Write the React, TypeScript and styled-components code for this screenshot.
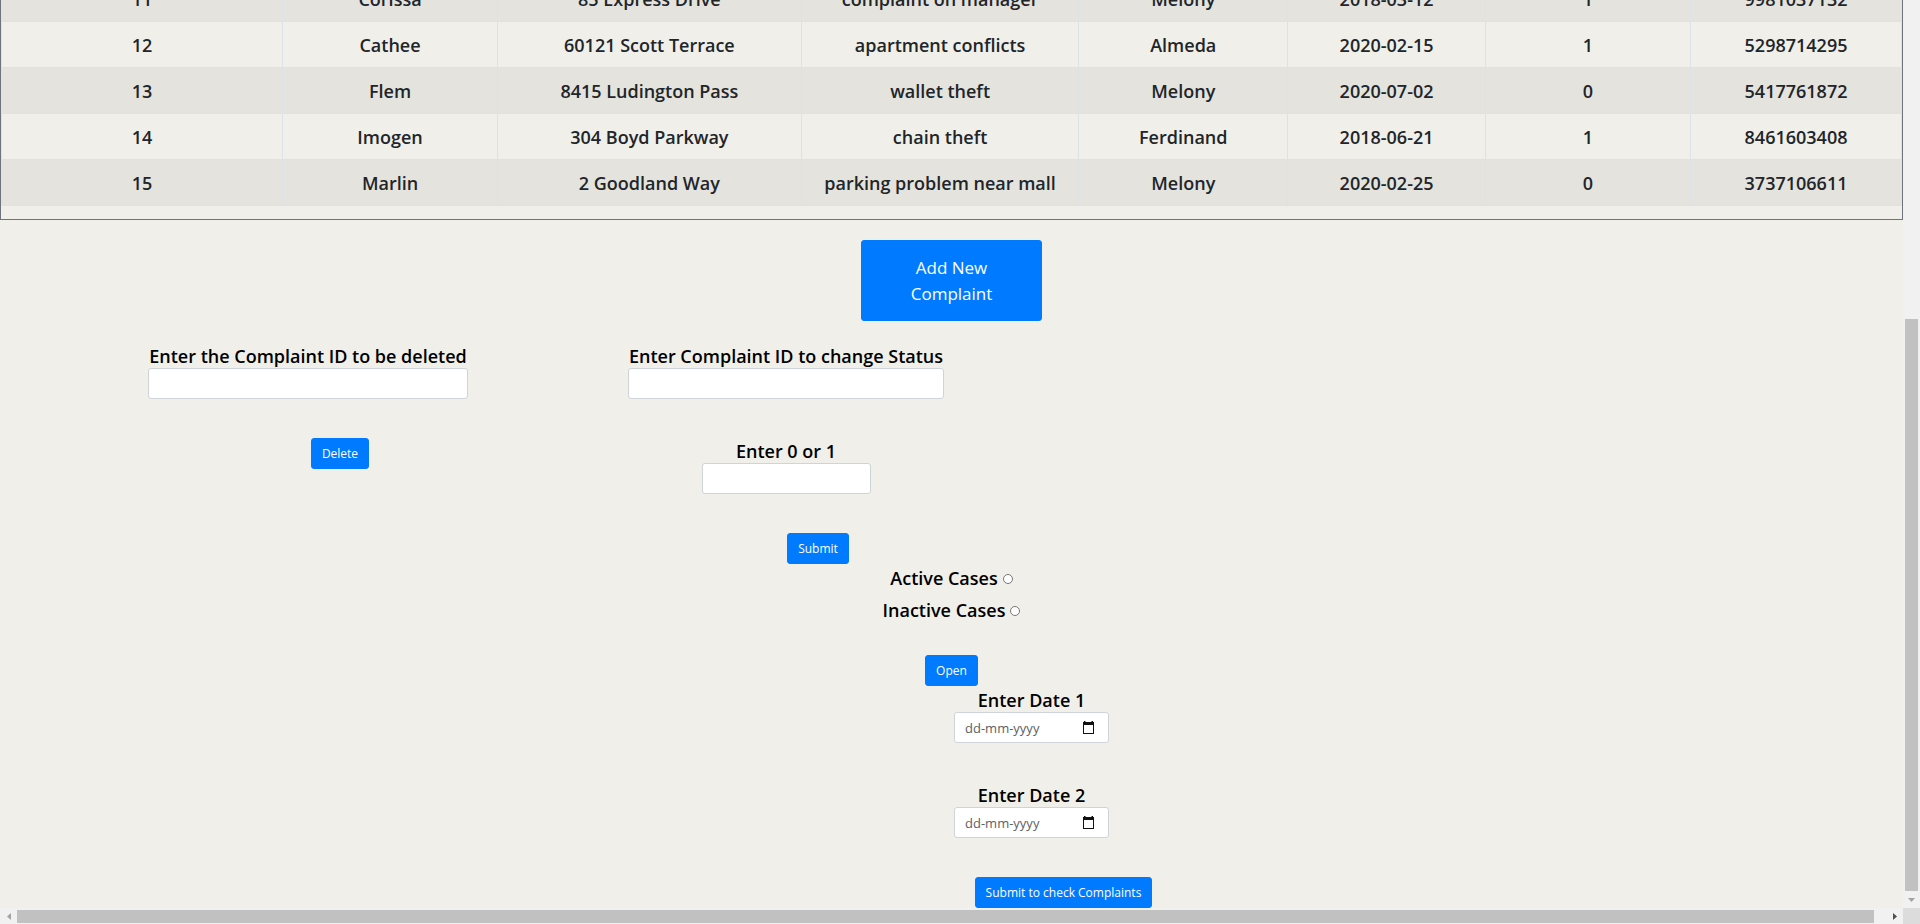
import React from "react";
import styled, { createGlobalStyle } from "styled-components";

const GlobalStyle = createGlobalStyle`
  *, *::before, *::after { box-sizing: border-box; }
  body {
    margin: 0;
    background: #f0efe9;
    color: #000;
    font-family: "Open Sans", "Noto Sans", sans-serif;
    font-size: 18px;
    font-weight: 600;
    line-height: 24px;
  }
`;

const Frame = styled.div`
  display: grid;
  grid-template-columns: minmax(0, 1fr) 17px;
  grid-template-rows: minmax(0, 1fr) 16px;
  height: 100vh;
`;

const Page = styled.main`
  display: flex;
  flex-direction: column;
  justify-content: flex-end;
  overflow: hidden;
`;

const TablePanel = styled.section`
  flex: none;
  padding-bottom: 13px;
  border: 1px solid #6c757d;
`;

const Table = styled.table`
  width: 100%;
  table-layout: fixed;
  border-collapse: collapse;
  color: #212529;
  text-align: center;
`;

const Row = styled.tr`
  height: 46px;
  &:nth-child(odd) { background: #e4e3dd; }
`;

const Cell = styled.td`
  padding: 1px 12px 0;
  border: 1px solid #dee2e6;
  white-space: nowrap;
`;

const Actions = styled.section`
  display: flex;
  flex: none;
  flex-direction: column;
  padding-top: 20px;
`;

const Button = styled.button`
  height: 31px;
  padding: 0 10px;
  border: 1px solid #007bff;
  border-radius: 3px;
  background: #007bff;
  color: #fff;
  font-family: inherit;
  font-size: 12px;
  font-weight: 400;
  line-height: 20px;
`;

const AddButton = styled(Button)`
  align-self: center;
  width: 181px;
  height: 81px;
  padding: 0 40px;
  font-size: 17px;
  line-height: 26px;
`;

const ShiftedButton = styled(Button)`
  margin-left: 64px;
`;

const IdForms = styled.div`
  display: grid;
  grid-template-columns: 320px 316px;
  column-gap: 160px;
  margin: 23px 0 2px 148px;
`;

const Form = styled.form`
  display: flex;
  flex-direction: column;
  align-items: center;
`;

const DateForm = styled(Form)`
  margin-top: 2px;
  padding-left: 160px;
`;

const Field = styled.div<{ $width?: string; $last?: boolean }>`
  display: flex;
  flex-direction: column;
  align-items: center;
  width: ${(p) => p.$width ?? "100%"};
  margin-bottom: ${(p) => (p.$last ? 39 : 40)}px;
  white-space: nowrap;
`;

const Input = styled.input`
  width: 100%;
  height: 31px;
  padding: 0 8px;
  border: 1px solid #ced4da;
  border-radius: 3px;
  background: #fff;
  font-family: inherit;
  font-size: 14px;
`;

const DateBox = styled.span`
  display: flex;
  align-items: center;
  width: 100%;
  height: 31px;
  padding: 0 13px 0 10px;
  border: 1px solid #ced4da;
  border-radius: 3px;
  background: #fff;
`;

const DateInput = styled.input`
  flex: 1;
  min-width: 0;
  padding: 0;
  border: 0;
  background: none;
  font-family: inherit;
  font-size: 13px;
  font-weight: 400;
  &::placeholder { color: #5c6166; opacity: 1; }
`;

const RadioLine = styled.label`
  display: flex;
  align-items: center;
  gap: 5px;
  margin-bottom: 8px;
`;

const Radio = styled.input`
  appearance: none;
  width: 10px;
  height: 10px;
  margin: 2px 0 0;
  border: 1px solid #767676;
  border-radius: 50%;
  background: #fff;
  &:checked { box-shadow: inset 0 0 0 2px #fff; background: #007bff; }
`;

const OpenButton = styled(Button)`
  margin-top: 25px;
`;

const VerticalBar = styled.div`
  display: grid;
  grid-template-rows: 319fr 572fr 17px;
  justify-items: center;
  align-items: center;
  background: #f1f1f1;
`;

const HorizontalBar = styled.div`
  display: grid;
  grid-template-columns: 17px minmax(0, 1fr) 29px;
  align-items: center;
  background: #f1f1f1;
`;

const Thumb = styled.div<{ $vertical?: boolean }>`
  width: ${(p) => (p.$vertical ? "13px" : "100%")};
  height: ${(p) => (p.$vertical ? "100%" : "13px")};
  background: #c1c1c1;
`;

const Arrow = styled.svg<{ $end?: boolean }>`
  display: block;
  justify-self: ${(p) => (p.$end ? "end" : "center")};
  margin-right: ${(p) => (p.$end ? 6 : 0)}px;
`;

const Corner = styled.div`
  background: #dcdcdc;
`;

const columnWidths = ["14.8%", "11.3%", "16%", "14.6%", "11%", "10.4%", "10.8%", "11.1%"];

const complaints = [
  ["11", "Corissa", "85 Express Drive", "complaint on manager", "Melony", "2018-03-12", "1", "9981037132"],
  ["12", "Cathee", "60121 Scott Terrace", "apartment conflicts", "Almeda", "2020-02-15", "1", "5298714295"],
  ["13", "Flem", "8415 Ludington Pass", "wallet theft", "Melony", "2020-07-02", "0", "5417761872"],
  ["14", "Imogen", "304 Boyd Parkway", "chain theft", "Ferdinand", "2018-06-21", "1", "8461603408"],
  ["15", "Marlin", "2 Goodland Way", "parking problem near mall", "Melony", "2020-02-25", "0", "3737106611"],
];

function DateField({ id, label, last }: { id: string; label: string; last?: boolean }) {
  return (
    <Field $width="155px" $last={last}>
      <label htmlFor={id}>{label}</label>
      <DateBox>
        <DateInput id={id} placeholder="dd-mm-yyyy" />
        <svg width="13" height="14" viewBox="0 0 13 14" aria-hidden="true">
          <path d="M2 0h1.500v1h6V0H11v1h1v12H1V1h1zM2 4v8h9V4z" fill="#111" fillRule="evenodd" />
        </svg>
      </DateBox>
    </Field>
  );
}

export default function App() {
  return (
    <>
      <GlobalStyle />
      <Frame>
        <Page>
          <TablePanel>
            <Table>
              <colgroup>
                {columnWidths.map((width, i) => (
                  <col key={i} style={{ width }} />
                ))}
              </colgroup>
              <tbody>
                {complaints.map((row) => (
                  <Row key={row[0]}>
                    {row.map((value, i) => (
                      <Cell key={i}>{value}</Cell>
                    ))}
                  </Row>
                ))}
              </tbody>
            </Table>
          </TablePanel>
          <Actions>
            <AddButton type="button">Add New Complaint</AddButton>
            <IdForms>
              <Form>
                <Field $last>
                  <label htmlFor="delete-id">Enter the Complaint ID to be deleted</label>
                  <Input id="delete-id" />
                </Field>
                <ShiftedButton type="button">Delete</ShiftedButton>
              </Form>
              <Form>
                <Field>
                  <label htmlFor="status-id">Enter Complaint ID to change Status</label>
                  <Input id="status-id" />
                </Field>
                <Field $width="169px" $last>
                  <label htmlFor="status">Enter 0 or 1</label>
                  <Input id="status" />
                </Field>
                <ShiftedButton type="button">Submit</ShiftedButton>
              </Form>
            </IdForms>
            <Form>
              <RadioLine>
                Active Cases
                <Radio type="radio" name="cases" value="active" />
              </RadioLine>
              <RadioLine>
                Inactive Cases
                <Radio type="radio" name="cases" value="inactive" />
              </RadioLine>
              <OpenButton type="button">Open</OpenButton>
            </Form>
            <DateForm>
              <DateField id="date-1" label="Enter Date 1" />
              <DateField id="date-2" label="Enter Date 2" last />
              <ShiftedButton type="button">Submit to check Complaints</ShiftedButton>
            </DateForm>
          </Actions>
        </Page>
        <VerticalBar>
          <span />
          <Thumb $vertical />
          <Arrow width="7" height="4" viewBox="0 0 7 4" aria-hidden="true">
            <path d="M0 0h7L3.500 4z" fill="#a3a3a3" />
          </Arrow>
        </VerticalBar>
        <HorizontalBar>
          <Arrow width="4" height="7" viewBox="0 0 4 7" aria-hidden="true">
            <path d="M4 0v7L0 3.500z" fill="#a3a3a3" />
          </Arrow>
          <Thumb />
          <Arrow $end width="4" height="7" viewBox="0 0 4 7" aria-hidden="true">
            <path d="M0 0v7l4-3.500z" fill="#505050" />
          </Arrow>
        </HorizontalBar>
        <Corner />
      </Frame>
    </>
  );
}
